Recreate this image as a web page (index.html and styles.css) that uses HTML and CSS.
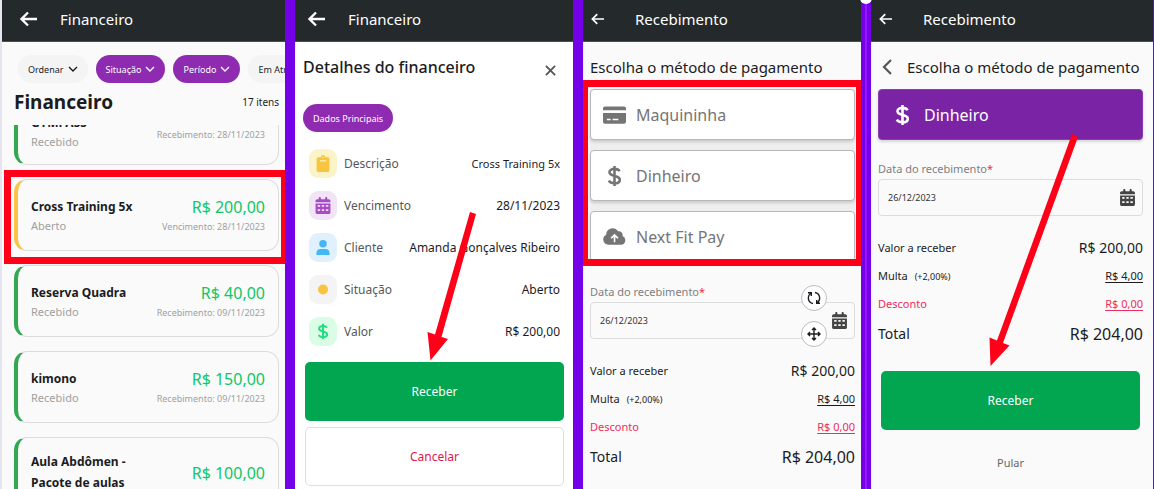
FILE: index.html
```html
<!DOCTYPE html>
<html lang="pt-BR">
<head>
    <meta charset="UTF-8">
    <meta name="viewport" content="width=device-width, initial-scale=1.0">
    <title>Financeiro</title>
    <link rel="stylesheet" href="styles.css">
</head>
<body>
    <!-- Shared icons -->
    <svg class="sprite" aria-hidden="true">
        <symbol id="i-back" viewBox="0 0 18 16"><path d="M17 8H2M8 1.500L1.500 8L8 14.500" fill="none" stroke="currentColor" stroke-width="2.300"/></symbol>
        <symbol id="i-down" viewBox="0 0 10 8"><path d="M1 2l4 4 4-4" fill="none" stroke="currentColor" stroke-width="1.400"/></symbol>
        <symbol id="i-calendar" viewBox="0 0 448 512"><path fill="currentColor" d="M96 32c0-18 14-32 32-32s32 14 32 32v32h128V32c0-18 14-32 32-32s32 14 32 32v32h48c26 0 48 22 48 48v48H0v-48c0-26 22-48 48-48h48zM0 192h448v272c0 26-22 48-48 48H48c-26 0-48-22-48-48zm64 48v56h72v-56zm124 0v56h72v-56zm124 0v56h72v-56zM64 368v56h72v-56zm124 0v56h72v-56zm124 0v56h72v-56z" fill-rule="evenodd"/></symbol>
        <symbol id="i-dollar" viewBox="0 0 16 24"><path d="M8 1v22M13.500 6.800C12.500 4.800 10.500 4.200 8 4.200c-3 0-5.500 1.300-5.500 3.800 0 5.200 11.300 2.600 11.300 8 0 2.700-2.800 4-5.800 4-2.800 0-5-.8-6.200-2.900" fill="none" stroke="currentColor" stroke-width="2.800"/></symbol>
    </svg>

    <main class="board">
        <!-- List of entries -->
        <section class="panel">
            <header class="topbar">
                <button class="back" aria-label="Voltar"><svg><use href="#i-back"/></svg></button>
                <span>Financeiro</span>
            </header>
            <div class="filters">
                <button class="chip">Ordenar <svg><use href="#i-down"/></svg></button>
                <button class="chip active">Situação <svg><use href="#i-down"/></svg></button>
                <button class="chip active">Período <svg><use href="#i-down"/></svg></button>
                <button class="chip">Em Atraso</button>
            </div>
            <div class="list-head">
                <h1>Financeiro</h1>
                <span>17 itens</span>
            </div>
            <div class="list">
                <div class="list-scroll">
                    <article class="entry tall">
                        <div><h2>GYMPASS</h2><p>Recebido</p></div>
                        <div class="amount"><small>Recebimento: 28/11/2023</small></div>
                    </article>
                    <article class="entry open marked">
                        <div><h2>Cross Training 5x</h2><p>Aberto</p></div>
                        <div class="amount"><strong>R$ 200,00</strong><small>Vencimento: 28/11/2023</small></div>
                    </article>
                    <article class="entry">
                        <div><h2>Reserva Quadra</h2><p>Recebido</p></div>
                        <div class="amount"><strong>R$ 40,00</strong><small>Recebimento: 09/11/2023</small></div>
                    </article>
                    <article class="entry">
                        <div><h2>kimono</h2><p>Recebido</p></div>
                        <div class="amount"><strong>R$ 150,00</strong><small>Recebimento: 09/11/2023</small></div>
                    </article>
                    <article class="entry">
                        <div><h2>Aula Abdômen - Pacote de aulas</h2><p>Recebido</p></div>
                        <div class="amount"><strong>R$ 100,00</strong><small>Recebimento: 09/11/2023</small></div>
                    </article>
                </div>
            </div>
        </section>

        <!-- Entry details -->
        <section class="panel white">
            <header class="topbar">
                <button class="back" aria-label="Voltar"><svg><use href="#i-back"/></svg></button>
                <span>Financeiro</span>
            </header>
            <div class="details-head">
                <h1>Detalhes do financeiro</h1>
                <button class="close" aria-label="Fechar"><svg viewBox="0 0 12 12"><path d="M1 1l10 10M11 1L1 11" stroke="currentColor" stroke-width="2"/></svg></button>
            </div>
            <button class="chip active tab">Dados Principais</button>
            <dl class="details">
                <div>
                    <dt><span class="tile yellow"><svg viewBox="0 0 12 16"><path fill="currentColor" fill-rule="evenodd" d="M1.500 2H4a2 2 0 0 1 4 0h2.500A1.500 1.500 0 0 1 12 3.500v11a1.500 1.500 0 0 1-1.500 1.500h-9A1.500 1.500 0 0 1 0 14.500v-11A1.500 1.500 0 0 1 1.500 2zM5.300 2.300a.7.7 0 1 0 1.400 0 .7.7 0 1 0-1.400 0zM3 5v1h6V5z"/></svg></span>Descrição</dt>
                    <dd class="small">Cross Training 5x</dd>
                </div>
                <div>
                    <dt><span class="tile purple"><svg><use href="#i-calendar"/></svg></span>Vencimento</dt>
                    <dd>28/11/2023</dd>
                </div>
                <div>
                    <dt><span class="tile blue"><svg viewBox="0 0 14 18"><path fill="currentColor" d="M7 1a4 4 0 1 1 0 8 4 4 0 0 1 0-8zM0 17v-2c0-3 2-4.500 4-4.500h6c2 0 4 1.500 4 4.500v2z"/></svg></span>Cliente</dt>
                    <dd>Amanda Gonçalves Ribeiro</dd>
                </div>
                <div>
                    <dt><span class="tile grey"><svg viewBox="0 0 16 16"><circle cx="8" cy="8" r="5" fill="currentColor"/></svg></span>Situação</dt>
                    <dd>Aberto</dd>
                </div>
                <div>
                    <dt><span class="tile green"><svg><use href="#i-dollar"/></svg></span>Valor</dt>
                    <dd>R$ 200,00</dd>
                </div>
            </dl>
            <div class="actions">
                <button class="btn primary">Receber</button>
                <button class="btn outline">Cancelar</button>
            </div>
            <svg class="arrow arrow-details" viewBox="0 0 50 150"><path d="M43 1l6 2-34.500 123 6.500 2-17.500 21.500L.5 121l7.500 2.500z" fill="#ff0018"/></svg>
        </section>

        <!-- Payment method -->
        <section class="panel">
            <header class="topbar thin">
                <button class="back" aria-label="Voltar"><svg><use href="#i-back"/></svg></button>
                <span>Recebimento</span>
            </header>
            <h1 class="pay-title">Escolha o método de pagamento</h1>
            <div class="methods marked">
                <button class="method"><svg viewBox="0 0 24 20"><path fill="currentColor" fill-rule="evenodd" d="M2 1h20a2 2 0 0 1 2 2v2H0V3a2 2 0 0 1 2-2zM0 8h24v9a2 2 0 0 1-2 2H2a2 2 0 0 1-2-2zM4 14v1.500h4V14zm6 0v1.500h6V14z"/></svg>Maquininha</button>
                <button class="method"><svg><use href="#i-dollar"/></svg>Dinheiro</button>
                <button class="method"><svg viewBox="0 0 24 20"><path fill="currentColor" fill-rule="evenodd" d="M5.500 18A5.500 5.500 0 0 1 3.300 7.600 6.800 6.800 0 0 1 15.800 4a4 4 0 0 1 4.600 5A4.700 4.700 0 0 1 19 18zM12 6.500L7.800 10.700l1.200 1.200 2.200-2v5.600h1.700V9.900l2.200 2 1.200-1.200z"/></svg>Next Fit Pay</button>
            </div>
            <div class="field">
                <label for="date-a">Data do recebimento<i>*</i></label>
                <div class="date-box">
                    <input type="text" id="date-a" value="26/12/2023">
                    <svg><use href="#i-calendar"/></svg>
                    <div class="handles">
                        <button aria-label="Girar"><svg viewBox="0 0 16 16" fill="none" stroke="currentColor" stroke-width="1.400"><path d="M7 13.500C1.500 12.500 1 6 5 3M2 2.700h3.300V6M9 2.500c5.500 1 6 7.500 2 10.500M14 13.300h-3.300V10"/></svg></button>
                        <button aria-label="Mover"><svg viewBox="0 0 16 16" fill="none" stroke="currentColor" stroke-width="1.400"><path d="M8 2v12M2 8h12M6 4l2-2 2 2M6 12l2 2 2-2M4 6L2 8l2 2M12 6l2 2-2 2"/></svg></button>
                    </div>
                </div>
            </div>
            <dl class="totals">
                <div><dt>Valor a receber</dt><dd class="mid">R$ 200,00</dd></div>
                <div><dt>Multa <small>(+2,00%)</small></dt><dd><a href="#">R$ 4,00</a></dd></div>
                <div class="discount"><dt>Desconto</dt><dd><a href="#">R$ 0,00</a></dd></div>
                <div class="total"><dt>Total</dt><dd>R$ 204,00</dd></div>
            </dl>
        </section>

        <!-- Confirm payment -->
        <section class="panel last">
            <header class="topbar thin">
                <button class="back" aria-label="Voltar"><svg><use href="#i-back"/></svg></button>
                <span>Recebimento</span>
            </header>
            <div class="pay-title with-back">
                <button aria-label="Voltar"><svg viewBox="0 0 10 16"><path d="M9 1L2 8l7 7" fill="none" stroke="currentColor" stroke-width="2.200"/></svg></button>
                <h1>Escolha o método de pagamento</h1>
            </div>
            <div class="methods single">
                <button class="method selected"><svg><use href="#i-dollar"/></svg>Dinheiro</button>
            </div>
            <div class="field">
                <label for="date-b">Data do recebimento<i>*</i></label>
                <div class="date-box">
                    <input type="text" id="date-b" value="26/12/2023">
                    <svg><use href="#i-calendar"/></svg>
                </div>
            </div>
            <dl class="totals">
                <div><dt>Valor a receber</dt><dd class="mid">R$ 200,00</dd></div>
                <div><dt>Multa <small>(+2,00%)</small></dt><dd><a href="#">R$ 4,00</a></dd></div>
                <div class="discount"><dt>Desconto</dt><dd><a href="#">R$ 0,00</a></dd></div>
                <div class="total"><dt>Total</dt><dd>R$ 204,00</dd></div>
            </dl>
            <div class="actions">
                <button class="btn primary">Receber</button>
                <button class="btn skip">Pular</button>
            </div>
            <svg class="arrow arrow-confirm" viewBox="0 0 90 234"><path d="M83 1l6 3-75 206 6.500 2.500L1.500 233 .5 204.500l7.500 3z" fill="#ff0018"/></svg>
        </section>
    </main>
</body>
</html>
```

FILE: styles.css
```css
* {
    box-sizing: border-box;
}

body {
    margin: 0;
    font-family: "Noto Sans", sans-serif;
    font-size: 12px;
    color: #1c1c1e;
    background: #7300e6;
}

h1, h2, p, dl, dd {
    margin: 0;
}

button {
    font-family: inherit;
    border: none;
    background: none;
    padding: 0;
    color: inherit;
    cursor: pointer;
}

svg {
    display: block;
    flex: none;
}

.sprite {
    position: absolute;
    width: 0;
    height: 0;
}

.board {
    display: grid;
    grid-template-columns: 283fr 278fr 278fr 282fr;
    gap: 10px;
    height: 100vh;
    padding-right: 1px;
    border-left: 2px solid #e6e4ee;
    overflow: hidden;
}

.panel {
    position: relative;
    display: flex;
    flex-direction: column;
    min-width: 0;
    min-height: 0;
    background: #fafafa;
    overflow: hidden;
}

.panel.white {
    background: #fff;
}

.panel.last {
    overflow: visible;
}

/* stripe and knob on the last divider */
.panel.last::before {
    content: "";
    position: absolute;
    top: 0;
    bottom: 0;
    left: -6px;
    width: 2px;
    background: #9a14ff;
}

.panel.last::after {
    content: "";
    position: absolute;
    top: -8px;
    left: -11px;
    width: 12px;
    height: 12px;
    border-radius: 50%;
    background: #fff;
}

/* Top bar */
.topbar {
    display: flex;
    align-items: center;
    gap: 22px;
    flex: none;
    height: 42px;
    padding: 0 18px 3px;
    background: #24292b;
    border-bottom: 1px solid #4b4f50;
    color: #fff;
    font-size: 15px;
}

.panel.white .topbar {
    padding-left: 13px;
}

.back svg {
    width: 18px;
    height: 16px;
}

.topbar.thin {
    gap: 30px;
    padding-left: 8px;
}

.thin .back svg {
    width: 14px;
    height: 12px;
}

/* Entry list */
.filters {
    display: flex;
    gap: 8px;
    flex: none;
    padding: 13px 0 0 16px;
}

.chip {
    display: flex;
    align-items: center;
    flex: none;
    gap: 4px;
    height: 28px;
    padding: 0 10px;
    border-radius: 14px;
    background: #f4f4f4;
    font-size: 9px;
    white-space: nowrap;
}

.chip.active {
    background: #8e2bb0;
    color: #fff;
}

.chip svg {
    width: 10px;
    height: 8px;
}

.list-head {
    display: flex;
    align-items: center;
    justify-content: space-between;
    flex: none;
    height: 42px;
    padding: 0 6px 4px 12px;
    font-size: 10px;
}

.list-head h1 {
    font-size: 19px;
}

.list {
    flex: 1;
    min-height: 0;
    padding: 0 6px 0 12px;
    overflow: hidden;
}

.list-scroll {
    display: flex;
    flex-direction: column;
    gap: 14px;
    margin-top: -50px;
}

.entry {
    position: relative;
    display: flex;
    align-items: center;
    justify-content: space-between;
    min-height: 72px;
    padding: 13px;
    border: 1px solid #dcdcde;
    border-left: 4px solid #32a852;
    border-radius: 13px;
}

.entry.open {
    border-left-color: #fbc345;
}

.entry.tall {
    align-items: flex-end;
    min-height: 90px;
}

.entry h2 {
    max-width: 116px;
    font-size: 12px;
    line-height: 21px;
}

.entry p {
    font-size: 11px;
    line-height: 18px;
    color: #a0a0a0;
}

.amount {
    display: flex;
    flex-direction: column;
    align-items: flex-end;
    padding-top: 3px;
    color: #0fc766;
}

.tall .amount {
    padding-bottom: 6px;
}

.amount strong {
    font-size: 16px;
    font-weight: 400;
    line-height: 20px;
}

.amount small {
    font-size: 9px;
    line-height: 20px;
    color: #a0a0a0;
}

.marked::after {
    content: "";
    position: absolute;
    border: 7px solid #ff0018;
    pointer-events: none;
}

.entry.marked::after {
    inset: -10px -10px -14px -14px;
}

/* Details */
.details-head {
    display: flex;
    align-items: center;
    justify-content: space-between;
    padding: 13px 17px 0 8px;
}

.details-head h1 {
    font-size: 16px;
    font-weight: 500;
    line-height: 24px;
}

.close svg {
    width: 11px;
    height: 11px;
    color: #555;
}

.close {
    padding-top: 6px;
}

.tab {
    align-self: flex-start;
    margin: 25px 0 0 8px;
}

.details {
    display: flex;
    flex-direction: column;
    gap: 13px;
    padding: 17px 13px 0 14px;
}

.details div {
    display: flex;
    align-items: center;
    justify-content: space-between;
}

.details dt {
    display: flex;
    align-items: center;
    gap: 7px;
    font-size: 12px;
    color: #55585a;
}

.details dd {
    font-size: 12px;
}

.details dd.small {
    font-size: 11px;
}

.tile {
    display: grid;
    place-items: center;
    width: 28px;
    height: 29px;
    border-radius: 9px;
}

.tile svg {
    width: 16px;
    height: 17px;
}

.yellow { background: #fbf4c8; color: #f9c440; }
.purple { background: #f1e4f5; color: #a94bc9; }
.blue { background: #e0f1fd; color: #43b8f5; }
.grey { background: #f4f4f4; color: #f9c440; }
.green { background: #dafde6; color: #22dd80; }

.actions {
    display: flex;
    flex-direction: column;
    gap: 6px;
    padding: 16px 9px 0 10px;
}

.btn {
    height: 59px;
    border-radius: 5px;
    font-size: 12px;
}

.primary {
    background: #02a651;
    color: #fff;
}

.outline {
    background: #fff;
    border: 1px solid #dedede;
    color: #e0164f;
}

.skip {
    color: #666;
    font-size: 11px;
}

/* Payment */
.pay-title {
    flex: none;
    height: 47px;
    padding: 13px 10px 0 7px;
    font-size: 15px;
    font-weight: 400;
    line-height: 24px;
    white-space: nowrap;
}

.with-back {
    display: flex;
    align-items: flex-start;
    gap: 15px;
    padding-left: 11px;
}

.with-back svg {
    width: 10px;
    height: 16px;
    margin-top: 4px;
    color: #555;
}

.with-back h1 {
    flex: 1;
    min-width: 0;
    font-size: inherit;
    font-weight: 400;
    overflow: hidden;
}

.methods {
    position: relative;
    display: flex;
    flex-direction: column;
    gap: 10px;
    margin: 0 6px 0 7px;
    background: #eee;
}

.methods.single {
    margin-right: 10px;
}

.methods.marked::after {
    inset: -9px -6px -4px -7px;
    border-width: 7px 5px;
}

.method {
    display: flex;
    align-items: center;
    gap: 10px;
    height: 51px;
    padding-left: 12px;
    border: 1px solid #b8b8b8;
    border-radius: 4px;
    background: #fff;
    box-shadow: 0 2px 3px rgba(0, 0, 0, 0.15);
    color: #757575;
    font-size: 16px;
}

.method svg {
    width: 23px;
    height: 22px;
}

.method.selected {
    background: #7a23a5;
    border-color: #8a3cb0;
    color: #fff;
}

.field {
    margin: 19px 6px 0 7px;
}

.methods.marked + .field {
    margin-top: 20px;
}

.last .field,
.last .totals {
    margin-right: 10px;
}

.field label {
    display: block;
    font-size: 11px;
    line-height: 20px;
    color: #808080;
}

.field i {
    color: #f03040;
    font-style: normal;
}

.date-box {
    position: relative;
    display: flex;
    align-items: center;
    height: 37px;
    padding: 0 7px 0 9px;
    border: 1px solid #dcdcdc;
    border-radius: 4px;
}

.date-box input {
    flex: 1;
    min-width: 0;
    padding: 0;
    border: none;
    background: none;
    font-family: inherit;
    font-size: 9px;
    color: #333;
}

.date-box > svg {
    width: 15px;
    height: 17px;
    color: #444;
}

.handles {
    position: absolute;
    top: -18px;
    right: 27px;
    display: flex;
    flex-direction: column;
    gap: 10px;
}

.handles button {
    display: grid;
    place-items: center;
    width: 26px;
    height: 26px;
    border: 1px solid #b9bdc4;
    border-radius: 50%;
    background: #fff;
}

.handles svg {
    width: 16px;
    height: 16px;
}

.totals {
    margin: 17px 6px 0 7px;
}

.totals div {
    display: flex;
    align-items: center;
    justify-content: space-between;
    height: 28px;
    font-size: 11px;
}

.totals small {
    margin-left: 4px;
    font-size: 9px;
}

.totals a {
    color: inherit;
    text-underline-offset: 2px;
}

.totals .mid {
    font-size: 14px;
}

.totals .discount {
    color: #ee2c60;
}

.totals .total {
    height: 33px;
    font-size: 14px;
}

.totals .total dd {
    font-size: 16px;
}

.last .actions {
    gap: 3px;
    padding: 21px 13px 0 10px;
}

/* Pointer arrows */
.arrow {
    position: absolute;
    pointer-events: none;
}

.arrow-details {
    top: 211px;
    left: 132px;
    width: 50px;
    height: 150px;
}

.arrow-confirm {
    top: 133px;
    left: 118px;
    width: 90px;
    height: 234px;
}
```
